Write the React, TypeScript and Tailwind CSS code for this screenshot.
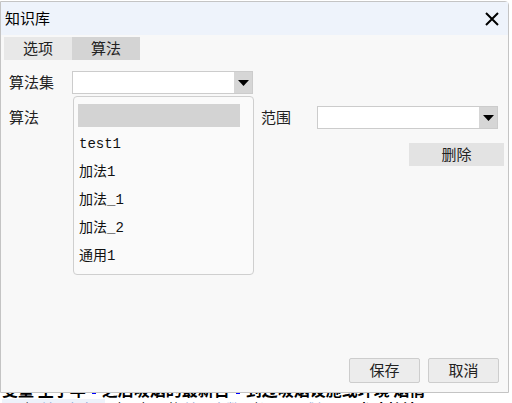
import React from 'react';

const cjk = { fontFamily: '"Noto Sans CJK SC", "Liberation Sans", sans-serif' };
const mono = { fontFamily: '"Liberation Mono", "Noto Sans CJK SC", monospace' };

const items = ['test1', '加法1', '加法_1', '加法_2', '通用1'];

const Arrow = () => (
    <svg width="11" height="6" viewBox="0 0 11 6">
        <path d="M0 0 H11 L5.5 6 Z" fill="#000" />
    </svg>
);

const Select = ({ width }: { width: string }) => (
    <div className={`flex h-[23px] ${width} border border-[#cccccc] bg-white`}>
        <div className="flex-1" />
        <div className="flex w-[18px] items-center justify-center bg-[#d6d6d6]">
            <Arrow />
        </div>
    </div>
);

export default function App() {
    return (
        <div className="relative h-[403px] w-[512px] overflow-hidden bg-white" style={cjk}>
            {/* page behind the dialog */}
            <div className="pt-[380px] pl-[2px] text-black">
                <div className="flex h-[19px] items-center gap-[6px] whitespace-nowrap text-[16px] font-bold leading-[19px]">
                    <span>变量 生子年</span>
                    <span className="h-[8px] w-[4px] bg-[#0000ff]" />
                    <span>之后吸烟的最新日</span>
                    <span className="h-[8px] w-[4px] bg-[#0000ff]" />
                    <span>到过吸烟设施或环境 烟情</span>
                </div>
                <div className="flex h-[18px] items-center gap-[10px] whitespace-nowrap text-[14px] leading-[18px]">
                    <span className="bg-[#edf2fa] px-[8px]">吸烟 <span className="text-[#8aa6d6]">输入框架</span></span>
                    <span>年</span>
                    <span>每日的 <span className="text-[#8aa6d6]">输入字数</span></span>
                    <span>者</span>
                    <span className="text-[#8aa6d6]">是否成烟</span>
                    <span className="ml-[20px] font-bold">都未接触</span>
                </div>
            </div>

            {/* dialog */}
            <div className="absolute left-0 top-[1px] flex h-[392px] w-[509px] flex-col rounded-tr-[4px] border border-[#c4c4c4] bg-[#f8f8f8]">
                <div className="flex h-[33px] items-center justify-between bg-[#eef3fb] pl-[4px] pr-[8px]">
                    <span className="text-[15px] text-black">知识库</span>
                    <svg width="16" height="16" viewBox="0 0 16 16">
                        <path d="M2 2 L14 14 M14 2 L2 14" stroke="#000" strokeWidth="2" />
                    </svg>
                </div>

                <div className="ml-[3px] mt-[2px] flex text-[15px] text-[#222]">
                    <div className="flex h-[23px] w-[68px] items-center justify-center bg-[#e8e8e8]">选项</div>
                    <div className="flex h-[23px] w-[68px] items-center justify-center bg-[#d4d4d4]">算法</div>
                </div>

                <div className="mt-[11px] flex items-center text-[15px] text-[#222]">
                    <span className="w-[71px] pl-[8px]">算法集</span>
                    <Select width="w-[181px]" />
                </div>

                <div className="mt-[12px] flex items-center text-[15px] text-[#222]">
                    <span className="w-[260px] pl-[8px]">算法</span>
                    <span className="w-[56px]">范围</span>
                    <Select width="w-[181px]" />
                </div>

                <div className="mt-[14px] flex justify-end pr-[4px]">
                    <button
                        type="button"
                        className="flex h-[23px] w-[95px] items-center justify-center bg-[#e3e3e3] text-[15px] text-[#222]"
                    >
                        删除
                    </button>
                </div>

                <div className="flex-1" />

                <div className="flex justify-end gap-[8px] pb-[9px] pr-[9px]">
                    <button
                        type="button"
                        className="flex h-[25px] w-[71px] items-center justify-center rounded-[2px] border border-[#cdcdcd] bg-[#ececec] text-[15px] text-[#222]"
                    >
                        保存
                    </button>
                    <button
                        type="button"
                        className="flex h-[25px] w-[71px] items-center justify-center rounded-[2px] border border-[#cdcdcd] bg-[#ececec] text-[15px] text-[#222]"
                    >
                        取消
                    </button>
                </div>

                {/* open dropdown list */}
                <div className="absolute left-[72px] top-[94px] h-[179px] w-[181px] rounded-[4px] border border-[#cfcfcf] bg-[#fafafa] pl-[4px] pt-[7px]">
                    <div className="h-[23px] w-[162px] bg-[#d3d3d3]" />
                    <div className="mt-[3px] text-[14px] text-[#111]" style={mono}>
                        {items.map((item) => (
                            <div key={item} className="flex h-[28px] items-center pl-[1px]">
                                {item}
                            </div>
                        ))}
                    </div>
                </div>
            </div>
        </div>
    );
}
